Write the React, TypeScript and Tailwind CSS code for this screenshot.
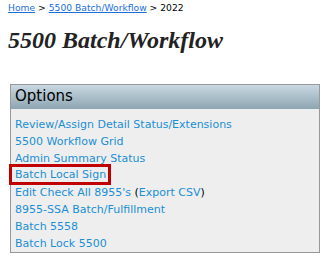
import React from "react";

const links = [
  "Review/Assign Detail Status/Extensions",
  "5500 Workflow Grid",
  "Admin Summary Status",
];
const links2 = ["8955-SSA Batch/Fulfillment", "Batch 5558", "Batch Lock 5500"];

export default function App() {
  const linkCls = "text-[#1a8fd6] leading-[17px] h-[17px] whitespace-nowrap";
  return (
    <div className="w-[336px] h-[263px] bg-white" style={{ fontFamily: "'DejaVu Sans', Verdana, sans-serif" }}>
      <div className="pl-[8px] pt-[2px] text-[9.2px] leading-[12px] text-black">
        <a className="text-[#1a6ee0] underline">Home</a> &gt;{" "}
        <a className="text-[#1a6ee0] underline">5500 Batch/Workflow</a> &gt; 2022
      </div>
      <h1
        className="pl-[8px] mt-[12px] text-[24px] leading-[28px] font-bold italic text-[#222]"
        style={{ fontFamily: "'Liberation Serif', 'Times New Roman', serif" }}
      >
        5500 Batch/Workflow
      </h1>
      <div className="ml-[10px] mt-[30px] w-[310px] border border-[#999] bg-[#eeeeee]">
        <div className="h-[24px] bg-gradient-to-b from-[#c8d8e2] to-[#8ea6b2] pl-[4px] text-[15px] leading-[22px] text-black">
          Options
        </div>
        <div className="pl-[4px] pt-[7px] text-[11px]">
          {links.map((l) => (
            <div key={l} className={linkCls}>{l}</div>
          ))}
          <div className="-ml-[6px] w-[102px] h-[21px] -mt-[3px] -mb-[1px] border-[3px] border-[#c00000] pl-[3px] text-[#1a8fd6] leading-[16px] whitespace-nowrap">
            Batch Local Sign
          </div>
          <div className={linkCls}>
            Edit Check All 8955's <span className="text-black">(</span>Export CSV<span className="text-black">)</span>
          </div>
          {links2.map((l) => (
            <div key={l} className={linkCls}>{l}</div>
          ))}
        </div>
      </div>
    </div>
  );
}
